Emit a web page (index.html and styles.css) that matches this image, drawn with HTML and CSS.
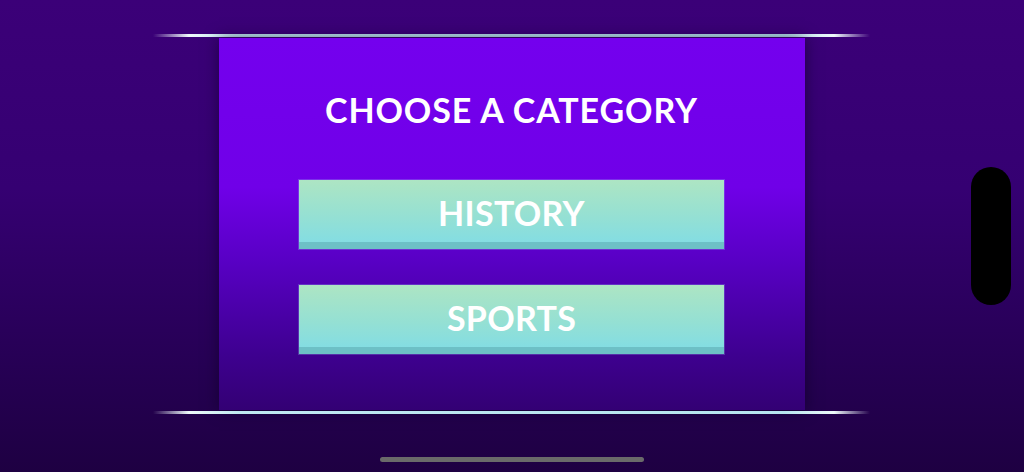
FILE: index.html
```html
<!DOCTYPE html>
<html lang="en">
<head>
<meta charset="utf-8">
<title>Quiz</title>
<link rel="stylesheet" href="styles.css">
</head>
<body>
<div class="screen">
  <div class="stage">
    <div class="rail"></div>
    <main class="panel">
      <h1 class="title">CHOOSE A CATEGORY</h1>
      <div class="choices">
        <button class="choice">HISTORY</button>
        <button class="choice">SPORTS</button>
      </div>
    </main>
    <div class="rail rail-bottom"></div>
  </div>
  <div class="home-bar"></div>
  <div class="side-notch"></div>
</div>
</body>
</html>
```

FILE: styles.css
```css
html, body {
  margin: 0;
  padding: 0;
}

body {
  width: 1024px;
  height: 472px;
  overflow: hidden;
  font-family: Lato, "Noto Sans", sans-serif;
}

.screen {
  position: relative;
  height: 472px;
  display: flex;
  flex-direction: column;
  align-items: center;
  background: linear-gradient(180deg, #3b0078 0%, #350072 40%, #250052 80%, #1e0042 100%);
}

.stage {
  margin-top: 34px;
  width: 717px;
  margin-left: -1px;
  display: flex;
  flex-direction: column;
  align-items: center;
}

.rail {
  align-self: stretch;
  height: 3px;
  background: linear-gradient(90deg, rgba(190, 235, 245, 0) 0%, #eef9fb 5%, #bfe8f1 12%, #b6e4ef 88%, #eef9fb 95%, rgba(190, 235, 245, 0) 100%);
}

.rail-bottom {
  margin-top: 1px;
}

.panel {
  width: 586px;
  height: 372px;
  margin-top: 1px;
  display: flex;
  flex-direction: column;
  align-items: center;
  background: linear-gradient(180deg, #7400ee 0%, #7000e8 40%, #5800c4 60%, #3e0090 85%, #330074 100%);
  box-shadow: 0 0 14px rgba(10, 0, 30, 0.55);
}

.title {
  margin: 54px 0 0;
  color: #fff;
  font-size: 34px;
  font-weight: 700;
  line-height: 36px;
  letter-spacing: 0.9px;
}

.choices {
  margin-top: 52px;
  display: flex;
  flex-direction: column;
  gap: 36px;
}

.choice {
  width: 425px;
  height: 69px;
  padding: 0 0 5px;
  border: 0;
  border-radius: 0;
  color: #fff;
  font-family: inherit;
  font-size: 34px;
  font-weight: 700;
  letter-spacing: 0.3px;
  background: linear-gradient(180deg, #ade5c3 0%, #94e0d4 55%, #84dde2 90%);
  box-shadow: inset 0 -7px 0 #6dc0c6, 0 0 0 1px rgba(160, 200, 240, 0.25);
}

.home-bar {
  position: absolute;
  left: 380px;
  top: 457px;
  width: 264px;
  height: 5px;
  border-radius: 3px;
  background: #6a6a6a;
}

.side-notch {
  position: absolute;
  left: 971px;
  top: 167px;
  width: 40px;
  height: 138px;
  border-radius: 20px;
  background: #000;
}
```
